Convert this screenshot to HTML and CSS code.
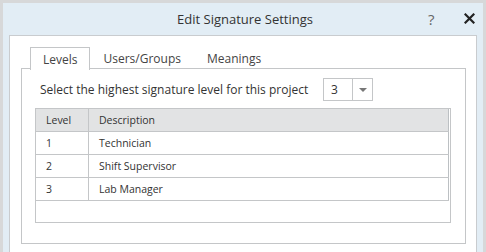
FILE: index.html
```html
<!DOCTYPE html>
<html lang="en">
<head>
    <meta charset="UTF-8">
    <title>Edit Signature Settings</title>
    <link rel="stylesheet" href="styles.css">
</head>
<body>

<div class="dialog">
    <div class="dialog-header">
        <span class="dialog-title">Edit Signature Settings</span>
        <span class="help-button">?</span>
        <span class="close-button">
            <svg width="11" height="11" viewBox="0 0 11 11">
                <path d="M1.5 1.5 L9.5 9.5 M9.5 1.5 L1.5 9.5" stroke="#222" stroke-width="2.2" stroke-linecap="square"/>
            </svg>
        </span>
    </div>

    <div class="dialog-body">
        <ul class="tabs">
            <li class="tab active">Levels</li>
            <li class="tab">Users/Groups</li>
            <li class="tab">Meanings</li>
        </ul>

        <div class="tab-panel">
            <div class="level-row">
                <span class="level-label">Select the highest signature level for this project</span>
                <div class="level-select">
                    <span class="level-value">3</span>
                    <span class="level-arrow"></span>
                </div>
            </div>

            <div class="grid">
                <table class="level-table">
                    <thead>
                        <tr>
                            <th class="col-level">Level</th>
                            <th>Description</th>
                        </tr>
                    </thead>
                    <tbody>
                        <tr><td class="col-level">1</td><td>Technician</td></tr>
                        <tr><td class="col-level">2</td><td>Shift Supervisor</td></tr>
                        <tr><td class="col-level">3</td><td>Lab Manager</td></tr>
                    </tbody>
                </table>
            </div>
        </div>
    </div>
</div>

</body>
</html>
```

FILE: styles.css
```css
html, body {
    margin: 0;
    padding: 0;
    height: 100%;
    overflow: hidden;
    background-color: #d7d8d9;
    font-family: "Open Sans", "Noto Sans", Arial, sans-serif;
    color: #333;
}

.dialog {
    margin: 3px 3px 0 3px;
    height: 249px;
    background-color: #e2edf5;
    display: flex;
    flex-direction: column;
}

.dialog-header {
    height: 32px;
    flex-shrink: 0;
    display: flex;
    align-items: center;
    position: relative;
}

.dialog-title {
    flex: 1;
    text-align: center;
    font-size: 13px;
    color: #333;
    padding-left: 4px;
}

.help-button {
    position: absolute;
    left: 425px;
    top: 6px;
    font-size: 15px;
    color: #666;
}

.close-button {
    position: absolute;
    left: 461px;
    top: 10px;
    line-height: 0;
}

.dialog-body {
    flex: 1;
    margin: 0 6px 0 6px;
    background-color: #fff;
    border: 1px solid #c9cccf;
    border-bottom: none;
    padding: 11px 10px 0 11px;
}

.tabs {
    list-style: none;
    margin: 0 0 0 9px;
    padding: 0;
    display: flex;
    height: 21px;
}

.tab {
    font-size: 12px;
    color: #444;
    padding: 2px 12px 0 12px;
    border: 1px solid transparent;
    border-bottom: none;
    line-height: 18px;
}

.tab.active {
    background-color: #fff;
    border-color: #c4c6c8;
    position: relative;
    z-index: 1;
    height: 19px;
    padding: 3px 12px 0 12px;
}

.tab-panel {
    border: 1px solid #c4c6c8;
    height: 165px;
    padding: 9px 14px 0 13px;
}

.level-row {
    display: flex;
    align-items: center;
    padding-left: 5px;
    height: 23px;
}

.level-label {
    font-size: 12px;
    color: #333;
    white-space: nowrap;
    width: 283px;
}

.level-select {
    width: 48px;
    height: 21px;
    border: 1px solid #c4c6c8;
    display: flex;
}

.level-value {
    width: 21px;
    border-right: 1px solid #c4c6c8;
    font-size: 12px;
    line-height: 21px;
    padding-left: 7px;
}

.level-arrow {
    flex: 1;
    display: flex;
    align-items: center;
    justify-content: center;
}

.level-arrow::after {
    content: "";
    border-left: 4px solid transparent;
    border-right: 4px solid transparent;
    border-top: 4px solid #777;
}

.grid {
    margin-top: 7px;
    height: 113px;
    border: 1px solid #c4c6c8;
    padding-right: 1px;
}

.level-table {
    width: 100%;
    border-collapse: collapse;
    font-size: 10.5px;
    color: #333;
}

.level-table th,
.level-table td {
    height: 22px;
    padding: 0 0 0 10px;
    text-align: left;
    font-weight: normal;
    border-bottom: 1px solid #c4c6c8;
    border-left: 1px solid #c4c6c8;
}

.level-table th:first-child,
.level-table td:first-child {
    border-left: none;
}

.level-table th:last-child,
.level-table td:last-child {
    border-right: 1px solid #bcc0c3;
}

.level-table th {
    background-color: #e2e3e4;
}

.col-level {
    width: 42px;
}
```
